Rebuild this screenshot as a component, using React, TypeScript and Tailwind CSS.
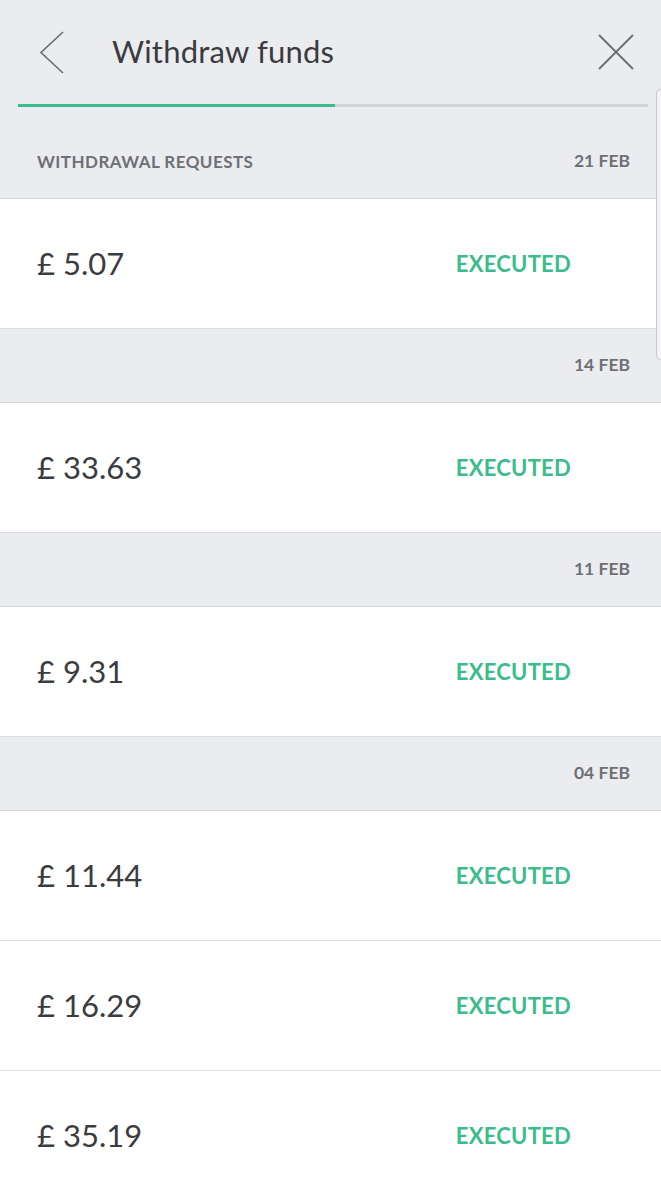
import React from "react";

type Item = { kind: "date"; date: string } | { kind: "row"; amount: string };

const items: Item[] = [
  { kind: "row", amount: "£ 5.07" },
  { kind: "date", date: "14 FEB" },
  { kind: "row", amount: "£ 33.63" },
  { kind: "date", date: "11 FEB" },
  { kind: "row", amount: "£ 9.31" },
  { kind: "date", date: "04 FEB" },
  { kind: "row", amount: "£ 11.44" },
  { kind: "row", amount: "£ 16.29" },
  { kind: "row", amount: "£ 35.19" },
];

export default function App() {
  return (
    <div
      className="relative w-[661px] h-[1200px] overflow-hidden bg-white"
      style={{ fontFamily: "Lato, 'Open Sans', sans-serif" }}
    >
      <div className="bg-[#ebecf0] border-b border-[#d8d9dd] h-[199px] flex flex-col">
        <div className="h-[104px] flex items-center relative">
          <svg className="absolute left-[39px] top-[31px]" width="26" height="44" viewBox="0 0 26 44">
            <polyline points="24,1 2,21.5 24,42" fill="none" stroke="#6b6c70" strokeWidth="1.6" />
          </svg>
          <div className="ml-[112px] text-[31px] leading-none text-[#3a3b3f] tracking-[0.2px] -mt-[2px]">Withdraw funds</div>
          <svg className="absolute left-[598px] top-[34px]" width="36" height="36" viewBox="0 0 36 36">
            <line x1="1" y1="1" x2="35" y2="35" stroke="#6b6c70" strokeWidth="1.8" />
            <line x1="35" y1="1" x2="1" y2="35" stroke="#6b6c70" strokeWidth="1.8" />
          </svg>
        </div>
        <div className="ml-[18px] mr-[13px] h-[3px] bg-[#d3d4d8] flex">
          <div className="w-[317px] h-full bg-[#3dbd8f]" />
        </div>
        <div className="flex-1 flex items-center justify-between pl-[37px] pr-[31px] pt-[18px]">
          <span className="text-[17px] font-bold text-[#6e7075] tracking-[0.45px]">WITHDRAWAL REQUESTS</span>
          <span className="text-[17.5px] font-bold text-[#6e7075]">21 FEB</span>
        </div>
      </div>
      {items.map((it, i) =>
        it.kind === "row" ? (
          <div key={i} className="h-[130px] border-b border-[#dcdddf] bg-white flex items-center justify-between pl-[37px] pr-[90px]">
            <span className="text-[31px] text-[#3b3c40] leading-none">{it.amount}</span>
            <span className="text-[22px] font-bold text-[#3cbc8d] leading-none tracking-[0.25px]">EXECUTED</span>
          </div>
        ) : (
          <div key={i} className="h-[74px] border-b border-[#d8d9dd] bg-[#ebecf0] flex items-center justify-end pr-[31px]">
            <span className="text-[17.5px] font-bold text-[#6e7075]">{it.date}</span>
          </div>
        )
      )}
      <div className="absolute right-0 top-[89px] h-[271px] w-[5px] rounded-l-[8px] border border-r-0 border-[#c6c7ca] bg-[#f4f4f6]" />
    </div>
  );
}
